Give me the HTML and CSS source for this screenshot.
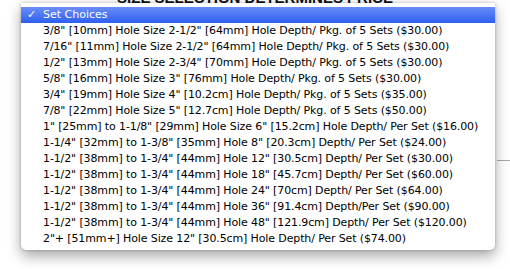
FILE: index.html
```html
<!DOCTYPE html>
<html lang="en">
<head>
    <meta charset="UTF-8">
    <title>Size Selection</title>
    <link rel="stylesheet" href="styles.css">
</head>
<body>
    <div class="page">
        <h3 class="price-title">SIZE SELECTION DETERMINES PRICE</h3>
        <div class="rule"></div>

        <ul class="menu">
            <li class="selected"><span class="check">&#10003;</span>Set Choices</li>
            <li>3/8" [10mm] Hole Size 2-1/2" [64mm] Hole Depth/ Pkg. of 5 Sets ($30.00)</li>
            <li>7/16" [11mm] Hole Size 2-1/2" [64mm] Hole Depth/ Pkg. of 5 Sets ($30.00)</li>
            <li>1/2" [13mm] Hole Size 2-3/4" [70mm] Hole Depth/ Pkg. of 5 Sets ($30.00)</li>
            <li>5/8" [16mm] Hole Size 3" [76mm] Hole Depth/ Pkg. of 5 Sets ($30.00)</li>
            <li>3/4" [19mm] Hole Size 4" [10.2cm] Hole Depth/ Pkg. of 5 Sets ($35.00)</li>
            <li>7/8" [22mm] Hole Size 5" [12.7cm] Hole Depth/ Pkg. of 5 Sets ($50.00)</li>
            <li>1" [25mm] to 1-1/8" [29mm] Hole Size 6" [15.2cm] Hole Depth/ Per Set ($16.00)</li>
            <li>1-1/4" [32mm] to 1-3/8" [35mm] Hole 8" [20.3cm] Depth/ Per Set ($24.00)</li>
            <li>1-1/2" [38mm] to 1-3/4" [44mm] Hole 12" [30.5cm] Depth/ Per Set ($30.00)</li>
            <li>1-1/2" [38mm] to 1-3/4" [44mm] Hole 18" [45.7cm] Depth/ Per Set ($60.00)</li>
            <li>1-1/2" [38mm] to 1-3/4" [44mm] Hole 24" [70cm] Depth/ Per Set ($64.00)</li>
            <li>1-1/2" [38mm] to 1-3/4" [44mm] Hole 36" [91.4cm] Depth/Per Set ($90.00)</li>
            <li>1-1/2" [38mm] to 1-3/4" [44mm] Hole 48" [121.9cm] Depth/ Per Set ($120.00)</li>
            <li>2"+ [51mm+] Hole Size 12" [30.5cm] Hole Depth/ Per Set ($74.00)</li>
        </ul>
    </div>
</body>
</html>
```
FILE: styles.css
```css
body {
    margin: 0;
    background-color: #fff;
    font-family: "DejaVu Sans", Verdana, sans-serif;
}

.page {
    position: relative;
    width: 510px;
    height: 269px;
    overflow: hidden;
}

.price-title {
    margin: -11px 0 0 0;
    text-align: center;
    font-family: "Liberation Sans", Arial, sans-serif;
    font-size: 15px;
    font-weight: bold;
    color: #111;
}

.rule {
    margin: 154px 0 0 497px;
    height: 1px;
    background-color: #aaa;
}

/* open popup list, sits over the page */
.menu {
    position: absolute;
    top: 3px;
    left: 21px;
    width: 474px;
    margin: 0;
    padding: 4px 0 3px 0;
    list-style: none;
    background-color: #fff;
    border-radius: 0 0 5px 5px;
    box-shadow: 0 6px 14px rgba(0, 0, 0, 0.35), 0 0 3px rgba(0, 0, 0, 0.25);
}

.menu li {
    height: 16px;
    line-height: 16px;
    padding-left: 22px;
    font-size: 11px;
    letter-spacing: -0.12px;
    color: #000;
    white-space: nowrap;
}

.menu li.selected {
    padding-left: 6px;
    letter-spacing: 0;
    color: #fff;
    background: linear-gradient(#6a8ef7, #2d5ff0);
}

.check {
    display: inline-block;
    width: 16px;
    font-weight: bold;
}
```
